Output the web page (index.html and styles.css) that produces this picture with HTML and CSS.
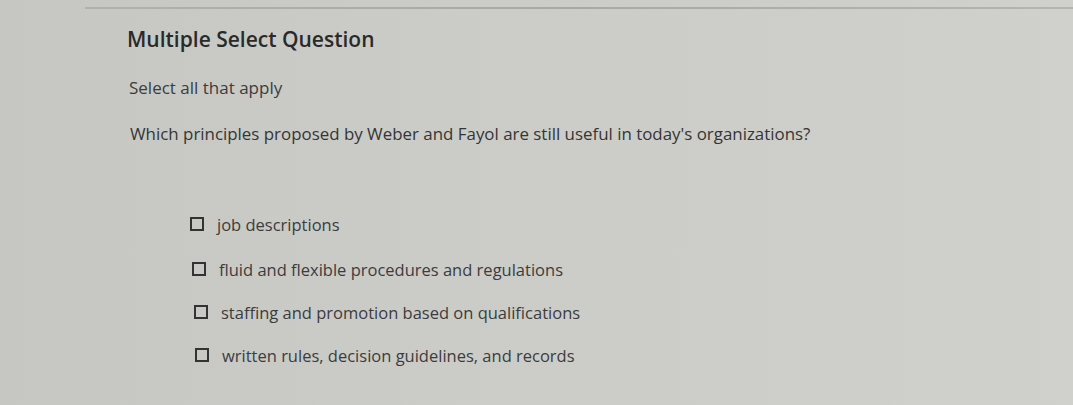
FILE: index.html
```html
<!DOCTYPE html>
<html>
<head>
<meta charset="utf-8">
<link rel="stylesheet" href="styles.css">
</head>
<body>
<div class="screen">
  <div class="topline"></div>
  <div class="content">
    <h1 class="title">Multiple Select Question</h1>
    <p class="hint">Select all that apply</p>
    <p class="question">Which principles proposed by Weber and Fayol are still useful in today's organizations?</p>
    <ul class="options">
      <li class="option"><span class="box"></span><span class="label">job descriptions</span></li>
      <li class="option option-2"><span class="box"></span><span class="label">fluid and flexible procedures and regulations</span></li>
      <li class="option option-3"><span class="box"></span><span class="label">staffing and promotion based on qualifications</span></li>
      <li class="option option-4"><span class="box"></span><span class="label">written rules, decision guidelines, and records</span></li>
    </ul>
  </div>
</div>
</body>
</html>
```
FILE: styles.css
```css
html, body {
  margin: 0;
  padding: 0;
}
body {
  width: 1073px;
  height: 405px;
  overflow: hidden;
  background: #c9cac6;
  font-family: "Open Sans", Lato, sans-serif;
  color: #3a3a3a;
}
.screen {
  width: 1073px;
  height: 405px;
  background: linear-gradient(90deg, #c6c7c3 0%, #cbccc8 40%, #cdcec9 70%, #d0d1cc 100%);
  padding-top: 7px;
  box-sizing: border-box;
}
.topline {
  margin-left: 85px;
  height: 2px;
  background: linear-gradient(90deg, #b0b1ad, #a8a9a5 50%, #b4b5b1);
}
.content {
  padding-left: 127px;
}
.title {
  margin: 17px 0 0 0;
  font-size: 21px;
  font-weight: 600;
  color: #2a2a2a;
  line-height: 26px;
}
.hint {
  margin: 26px 0 0 2px;
  font-size: 17px;
  line-height: 20px;
  color: #3c3c3c;
}
.question {
  margin: 26px 0 0 3px;
  font-size: 16.9px;
  line-height: 20px;
  color: #353535;
}
.options {
  list-style: none;
  margin: 70px 0 0 63px;
  padding: 0;
  display: flex;
  flex-direction: column;
  gap: 24px;
}
.option {
  display: flex;
  align-items: center;
  gap: 13px;
  height: 20px;
  font-size: 16.5px;
  color: #3c3c3c;
}
.option-2 { margin-left: 2px; margin-top: 1px; }
.option-3 { margin-left: 4px; margin-top: -1px; }
.option-4 { margin-left: 5px; margin-top: -1px; }
.box {
  width: 10px;
  height: 10px;
  border: 2.5px solid #333;
  flex: none;
}
```
